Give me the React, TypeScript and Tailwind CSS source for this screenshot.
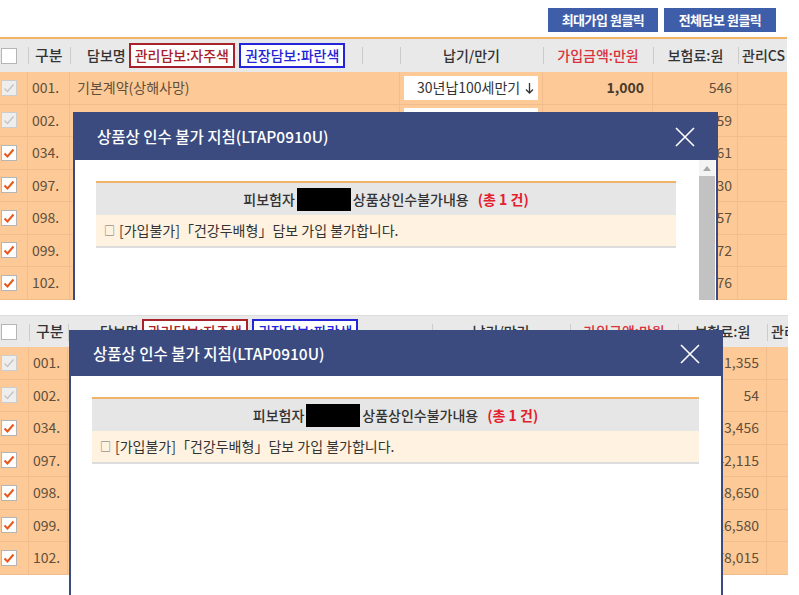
import React from "react";

const FONT = "font-['Malgun_Gothic','Noto_Sans_CJK_KR',sans-serif]";

type CheckState = "empty" | "disabled" | "on";

function Check({ state }: { state: CheckState }) {
    const box =
        state === "disabled"
            ? "bg-[#eeeeee] border-[#cdcdcd]"
            : "bg-white border-[#b5b5b5]";
    return (
        <div className={`w-[16px] h-[16px] border ${box} flex items-center justify-center`}>
            {state !== "empty" && (
                <svg width="14" height="14" viewBox="0 0 14 14">
                    <polyline
                        points="2.5,7.5 5.5,10.5 11.5,3.5"
                        fill="none"
                        stroke={state === "on" ? "#e8581c" : "#c4c4c4"}
                        strokeWidth={state === "on" ? 2 : 1.4}
                    />
                </svg>
            )}
        </div>
    );
}

interface Row {
    no: string;
    name?: string;
    state: CheckState;
    amount?: string;
    premium: string;
    term?: string;
}

interface Layout {
    cols: string;
    width: string;
    nameLabelPad: string;
    premiumPad: string;
}

const topRows: Row[] = [
    { no: "001.", name: "기본계약(상해사망)", state: "disabled", amount: "1,000", premium: "546", term: "30년납100세만기" },
    { no: "002.", state: "disabled", premium: "1,359" },
    { no: "034.", state: "on", premium: "3,461" },
    { no: "097.", state: "on", premium: "2,130" },
    { no: "098.", state: "on", premium: "8,657" },
    { no: "099.", state: "on", premium: "6,572" },
    { no: "102.", state: "on", premium: "8,076" },
];

const bottomRows: Row[] = [
    { no: "001.", state: "disabled", premium: "1,355" },
    { no: "002.", state: "disabled", premium: "54" },
    { no: "034.", state: "on", premium: "3,456" },
    { no: "097.", state: "on", premium: "42,115" },
    { no: "098.", state: "on", premium: "18,650" },
    { no: "099.", state: "on", premium: "16,580" },
    { no: "102.", state: "on", premium: "78,015" },
];

/* header cell with the short grey divider on its left */
function HeadCell({ children, className = "", divider = true }: { children?: React.ReactNode; className?: string; divider?: boolean }) {
    return (
        <div
            className={`relative h-full flex items-center overflow-hidden whitespace-nowrap ${
                divider
                    ? "before:absolute before:left-0 before:top-[8px] before:h-[17px] before:w-px before:bg-[#cccccc]"
                    : ""
            } ${className}`}
        >
            {children}
        </div>
    );
}

function CoverageTable({ rows, layout, top }: { rows: Row[]; layout: Layout; top: boolean }) {
    return (
        <div className={layout.width}>
            {/* header */}
            <div
                className={`grid ${layout.cols} ${
                    top ? "h-[35px] border-t-2 border-[#f3b468]" : "h-[32px] border-t border-[#dddddd]"
                } bg-[#e9e9e9] text-[14px] font-medium text-[#333333]`}
            >
                <HeadCell divider={false} className="pl-[1px]">
                    <Check state="empty" />
                </HeadCell>
                <HeadCell className="pl-[7px] text-[15px]">구분</HeadCell>
                <HeadCell className={layout.nameLabelPad}>
                    <span>담보명</span>
                    <span className="ml-[3px] px-[4px] leading-[21px] border-2 border-[#a8222a] text-[#a8222a] bg-white">
                        관리담보:자주색
                    </span>
                    <span className="ml-[4px] px-[4px] leading-[21px] border-2 border-[#2424d8] text-[#2424d8] bg-white">
                        권장담보:파란색
                    </span>
                    {top && <span className="ml-[17px] w-px h-[17px] bg-[#cccccc]" />}
                </HeadCell>
                <HeadCell className="justify-center">납기/만기</HeadCell>
                <HeadCell className="justify-center text-[#d8323c]">가입금액:만원</HeadCell>
                <HeadCell className="justify-center">보험료:원</HeadCell>
                <HeadCell className="pl-[4px]">관리CS</HeadCell>
            </div>

            {/* body rows */}
            {rows.map((r) => (
                <div
                    key={r.no}
                    className={`grid ${layout.cols} h-[32.5px] bg-[#fdca97] text-[14px] text-[#5f4f3c]`}
                >
                    <div className="flex items-center pl-[1px] border-r border-b border-[#f1bd8c]">
                        <Check state={r.state} />
                    </div>
                    <div className="flex items-center pl-[4px] border-r border-b border-[#f1bd8c]">{r.no}</div>
                    <div className="flex items-center pl-[7px] border-r border-b border-[#f1bd8c] whitespace-nowrap">
                        {r.name}
                    </div>
                    <div className="flex items-center px-[4px] border-r border-b border-[#f1bd8c]">
                        <div className="relative w-full h-[24px] bg-white text-[#333333] text-[14px] flex items-center pl-[13px] overflow-hidden whitespace-nowrap">
                            {r.term}
                            {r.term && (
                                <svg className="absolute right-[4px] top-[7px]" width="9" height="11" viewBox="0 0 9 11">
                                    <path d="M4.5 0 V10 M1 6.5 L4.5 10 L8 6.5" fill="none" stroke="#333" strokeWidth="1.3" />
                                </svg>
                            )}
                        </div>
                    </div>
                    <div className="flex items-center justify-end pr-[8px] border-r border-b border-[#f1bd8c] font-bold text-[#4a3c2c]">
                        {r.amount}
                    </div>
                    <div className={`flex items-center justify-end ${layout.premiumPad} border-r border-b border-[#f1bd8c]`}>
                        {r.premium}
                    </div>
                    <div className="border-b border-[#f1bd8c]" />
                </div>
            ))}
        </div>
    );
}

function GuideModal({ className, headerH, scroll, tableW }: { className: string; headerH: string; scroll: boolean; tableW: string }) {
    return (
        <div className={`absolute border-2 border-[#3b4b7f] bg-white flex flex-col ${className}`}>
            <div className={`${headerH} shrink-0 bg-[#3b4b7f] flex items-center justify-between pl-[22px] pr-[20px]`}>
                <span className="text-white text-[15.5px] font-medium">상품상 인수 불가 지침(LTAP0910U)</span>
                <svg width="22" height="22" viewBox="0 0 22 22">
                    <path d="M2 2 L20 20 M20 2 L2 20" stroke="#ffffff" strokeWidth="1.6" />
                </svg>
            </div>
            <div className="flex flex-1">
                <div className="flex-1 pt-[21px] pl-[21px]">
                    <div className={`${tableW} border-t-2 border-[#efb46a] text-[14px] text-[#333333]`}>
                        <div className="h-[32px] bg-[#e6e6e6] flex items-center justify-center font-medium">
                            <span>피보험자</span>
                            <span className="mx-[2px] w-[54px] h-[23px] bg-black" />
                            <span>상품상인수불가내용</span>
                            <span className="ml-[9px] font-bold text-[#e3202c]">(총 1 건)</span>
                        </div>
                        <div className="h-[33px] bg-[#fff2e0] border-b-2 border-[#dcdcdc] flex items-center pl-[8px] whitespace-nowrap">
                            <span className="text-[11px] text-[#666666] mr-[4px]">□</span>
                            [가입불가]「건강두배형」담보 가입 불가합니다.
                        </div>
                    </div>
                </div>
                {scroll && (
                    <div className="w-[16px] mr-[1px] flex flex-col bg-[#f4f4f4]">
                        <div className="h-[16px] flex items-center justify-center">
                            <svg width="8" height="5" viewBox="0 0 8 5">
                                <path d="M0 5 L4 0 L8 5 Z" fill="#a8a8a8" />
                            </svg>
                        </div>
                        <div className="flex-1 bg-[#c2c2c2]" />
                    </div>
                )}
            </div>
        </div>
    );
}

export default function App() {
    return (
        <div className={`w-[799px] h-[595px] bg-white overflow-hidden ${FONT}`}>
            {/* first capture */}
            <div className="relative h-[300px] overflow-hidden">
                <div className="h-[37px] flex justify-end items-start pt-[8px] pr-[23px] gap-[6px]">
                    <button className="w-[110px] h-[24px] bg-[#3e5ea9] text-white text-[13px] font-bold tracking-[-0.5px]">
                        최대가입 원클릭
                    </button>
                    <button className="w-[112px] h-[24px] bg-[#3e5ea9] text-white text-[13px] font-bold tracking-[-0.5px]">
                        전체담보 원클릭
                    </button>
                </div>
                <CoverageTable
                    rows={topRows}
                    top
                    layout={{
                        cols: "grid-cols-[28px_42px_330px_143px_110px_85px_49px]",
                        width: "w-[787px]",
                        nameLabelPad: "pl-[17px]",
                        premiumPad: "pr-[5px]",
                    }}
                />
                <GuideModal
                    className="left-[73px] top-[112px] w-[645px] h-[230px]"
                    headerH="h-[46px]"
                    scroll
                    tableW="w-[580px]"
                />
            </div>

            {/* second capture */}
            <div className="relative mt-[15px] h-[280px] overflow-hidden">
                <CoverageTable
                    rows={bottomRows}
                    top={false}
                    layout={{
                        cols: "grid-cols-[29px_39px_364px_138px_108px_89px_21px]",
                        width: "w-[788px]",
                        nameLabelPad: "pl-[32px]",
                        premiumPad: "pr-[7px]",
                    }}
                />
                <GuideModal
                    className="left-[69px] top-[15px] w-[654px] h-[290px]"
                    headerH="h-[44px]"
                    scroll={false}
                    tableW="w-[607px]"
                />
            </div>
        </div>
    );
}
